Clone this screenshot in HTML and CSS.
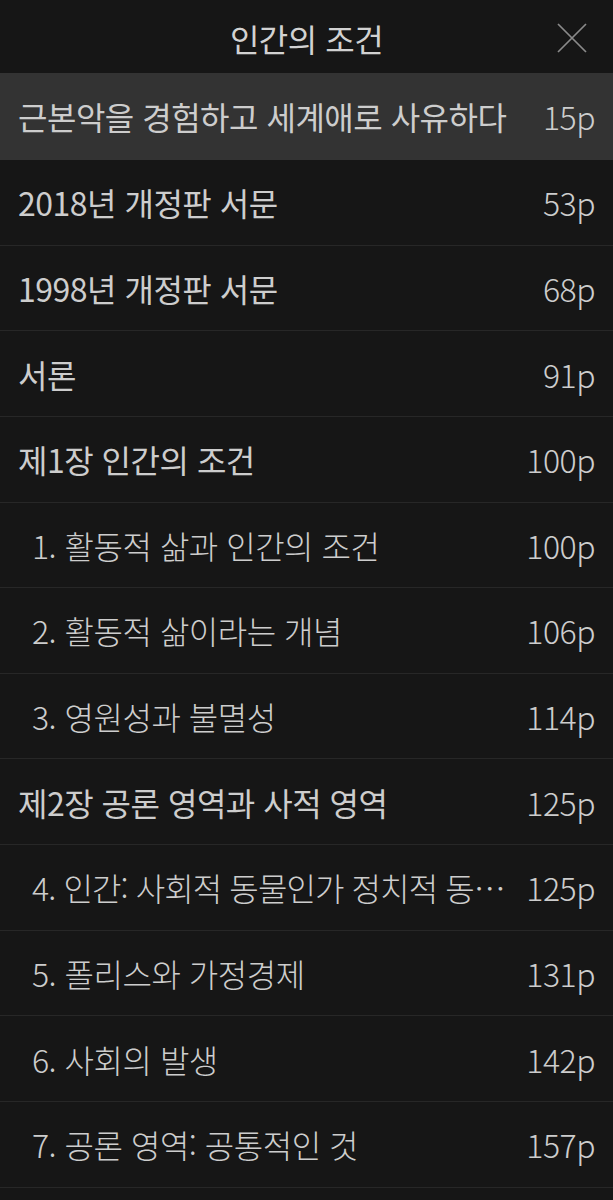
FILE: index.html
```html
<!DOCTYPE html>
<html lang="ko">
<head>
<meta charset="utf-8">
<title>인간의 조건 - 목차</title>
<link rel="stylesheet" href="styles.css">
</head>
<body>
<div class="toc">
  <header class="toc-header">
    <h1 class="toc-title">인간의 조건</h1>
    <button class="close-btn" aria-label="닫기">
      <svg width="32" height="32" viewBox="0 0 32 32"><path d="M2 2 L30 30 M30 2 L2 30" stroke="#8a8a8a" stroke-width="1.7" fill="none"/></svg>
    </button>
  </header>
  <ul class="toc-list">
    <li class="toc-item chapter active"><span class="item-title">근본악을 경험하고 세계애로 사유하다</span><span class="item-page">15p</span></li>
    <li class="toc-item chapter"><span class="item-title">2018년 개정판 서문</span><span class="item-page">53p</span></li>
    <li class="toc-item chapter"><span class="item-title">1998년 개정판 서문</span><span class="item-page">68p</span></li>
    <li class="toc-item chapter"><span class="item-title">서론</span><span class="item-page">91p</span></li>
    <li class="toc-item chapter"><span class="item-title">제1장 인간의 조건</span><span class="item-page">100p</span></li>
    <li class="toc-item section"><span class="item-title">1. 활동적 삶과 인간의 조건</span><span class="item-page">100p</span></li>
    <li class="toc-item section"><span class="item-title">2. 활동적 삶이라는 개념</span><span class="item-page">106p</span></li>
    <li class="toc-item section"><span class="item-title">3. 영원성과 불멸성</span><span class="item-page">114p</span></li>
    <li class="toc-item chapter"><span class="item-title">제2장 공론 영역과 사적 영역</span><span class="item-page">125p</span></li>
    <li class="toc-item section"><span class="item-title tight">4. 인간: 사회적 동물인가 정치적 동…</span><span class="item-page">125p</span></li>
    <li class="toc-item section"><span class="item-title">5. 폴리스와 가정경제</span><span class="item-page">131p</span></li>
    <li class="toc-item section"><span class="item-title">6. 사회의 발생</span><span class="item-page">142p</span></li>
    <li class="toc-item section"><span class="item-title">7. 공론 영역: 공통적인 것</span><span class="item-page">157p</span></li>
  </ul>
</div>
</body>
</html>
```

FILE: styles.css
```css
html, body {
  margin: 0;
  padding: 0;
  background: #161616;
}
body {
  height: 1200px;
  overflow: hidden;
  font-family: "Noto Sans CJK KR", "Noto Sans", sans-serif;
  color: #cdcdcd;
}
.toc {
  display: flex;
  flex-direction: column;
}
.toc-header {
  height: 73px;
  display: flex;
  align-items: center;
  justify-content: center;
  position: relative;
}
.toc-title {
  margin: 0;
  font-size: 32px;
  font-weight: 400;
  letter-spacing: -0.5px;
  color: #d2d2d2;
  line-height: 1.5;
  padding-top: 2px;
}
.close-btn {
  position: absolute;
  right: 25px;
  top: 22px;
  width: 32px;
  height: 32px;
  padding: 0;
  border: 0;
  background: none;
  display: flex;
}
.toc-list {
  list-style: none;
  margin: 0;
  padding: 0;
}
.toc-item {
  box-sizing: border-box;
  height: 85.64px;
  display: flex;
  align-items: center;
  justify-content: space-between;
  gap: 10px;
  padding: 0 18px;
  border-bottom: 1.5px solid #272727;
  font-size: 32px;
  letter-spacing: -0.5px;
  line-height: 1.5;
}
.toc-item.active {
  background: #333333;
  border-bottom-color: #333333;
  height: 87px;
}
.toc-item.section {
  padding-left: 32px;
}
.item-title {
  white-space: nowrap;
}
.item-title.tight {
  letter-spacing: -0.9px;
}
.chapter .item-title {
  font-weight: 400;
}
.section .item-title {
  font-weight: 300;
}
.item-page {
  flex: none;
  font-weight: 300;
}
```
